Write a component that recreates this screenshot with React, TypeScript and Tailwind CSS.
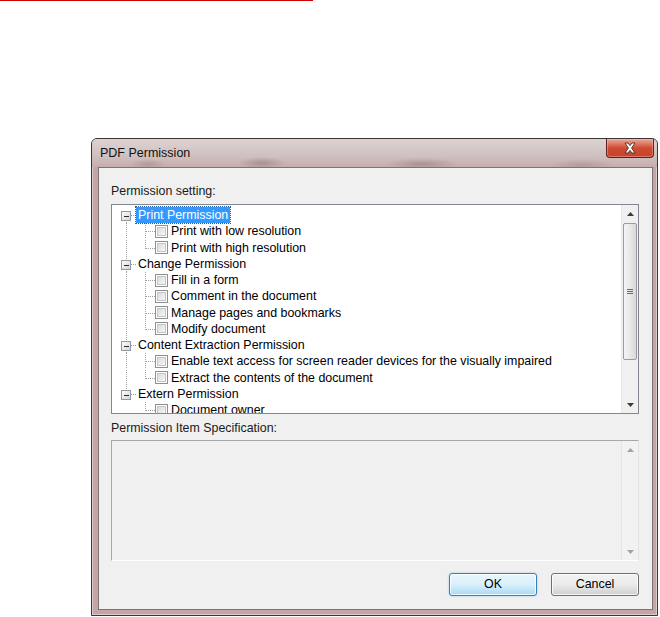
import React from 'react';

interface TreeGroup {
  label: string;
  selected?: boolean;
  children: string[];
}

const groups: TreeGroup[] = [
  { label: 'Print Permission', selected: true, children: ['Print with low resolution', 'Print with high resolution'] },
  {
    label: 'Change Permission',
    children: ['Fill in a form', 'Comment in the document', 'Manage pages and bookmarks', 'Modify document']
  },
  {
    label: 'Content Extraction Permission',
    children: [
      'Enable text access for screen reader devices for the visually impaired',
      'Extract the contents of the document'
    ]
  },
  { label: 'Extern Permission', children: ['Document owner'] }
];

const DOT = '#a0a0a0';

// dotted connector for a root node, with the expand box
const RootLines: React.FC<{ first: boolean; last: boolean }> = ({ first, last }) => (
  <svg width="24" height="16" className="shrink-0" shapeRendering="crispEdges">
    {!first && <line x1="14.5" y1="0" x2="14.5" y2="4" stroke={DOT} strokeDasharray="1 1" />}
    {!last && <line x1="14.5" y1="13" x2="14.5" y2="16" stroke={DOT} strokeDasharray="1 1" />}
    <line x1="19" y1="8.5" x2="24" y2="8.5" stroke={DOT} strokeDasharray="1 1" />
    <defs>
      <linearGradient id="bx" x1="0" y1="0" x2="1" y2="1">
        <stop offset="0" stopColor="#ffffff" />
        <stop offset="1" stopColor="#d4d4d4" />
      </linearGradient>
    </defs>
    <rect x="9.5" y="4.5" width="9" height="9" fill="url(#bx)" stroke="#8f9aa6" />
    <line x1="12" y1="9.5" x2="17" y2="9.5" stroke="#2b2b2b" />
  </svg>
);

// dotted connector for a child row
const ChildLines: React.FC<{ rootLine: boolean; lastChild: boolean }> = ({ rootLine, lastChild }) => (
  <svg width="43" height="16" className="shrink-0" shapeRendering="crispEdges">
    {rootLine && <line x1="14.5" y1="0" x2="14.5" y2="16" stroke={DOT} strokeDasharray="1 1" />}
    <line x1="33.5" y1="0" x2="33.5" y2={lastChild ? 9 : 16} stroke={DOT} strokeDasharray="1 1" />
    <line x1="34" y1="8.5" x2="43" y2="8.5" stroke={DOT} strokeDasharray="1 1" />
  </svg>
);

const CheckBox: React.FC = () => (
  <div className="w-[13px] h-[13px] shrink-0 border border-[#8f8f8f] bg-white p-[1px]">
    <div className="w-full h-full border border-[#c2c6cb] bg-gradient-to-br from-[#dcdcdc] to-[#f6f6f6]" />
  </div>
);

const Arrow: React.FC<{ up?: boolean; color?: string }> = ({ up, color = '#222' }) => (
  <svg width="7" height="4" viewBox="0 0 7 4">
    <path d={up ? 'M0 4 L3.5 0 L7 4 Z' : 'M0 0 L7 0 L3.5 4 Z'} fill={color} />
  </svg>
);

const TreeScrollBar: React.FC = () => (
  <div className="w-[17px] shrink-0 flex flex-col bg-[#f0f0f0] border-l border-[#e8e8e8]">
    <div className="h-[17px] flex items-center justify-center">
      <Arrow up color="#3a3a3a" />
    </div>
    <div className="mt-[1px] mx-[1px] h-[137px] rounded-[2px] border border-[#9b9b9b] bg-gradient-to-r from-[#f4f4f4] via-[#e9e9e9] to-[#d8d8d8] flex items-center justify-center">
      <div className="flex flex-col gap-[1px]">
        <div className="w-[6px] h-[1px] bg-[#6b6b6b]" />
        <div className="w-[6px] h-[1px] bg-[#6b6b6b]" />
        <div className="w-[6px] h-[1px] bg-[#6b6b6b]" />
      </div>
    </div>
    <div className="flex-1" />
    <div className="h-[17px] flex items-center justify-center">
      <Arrow color="#3a3a3a" />
    </div>
  </div>
);

const App: React.FC = () => {
  return (
    <div className="w-[660px] h-[617px] bg-white overflow-hidden font-['Liberation_Sans',Arial,sans-serif] text-[12.4px] text-black">
      {/* red rule at the very top */}
      <div className="w-[313px] h-[1px] bg-[#d00000]" />

      <div className="pt-[137px] pl-[91px]">
        {/* window */}
        <div className="w-[567px] h-[478px] rounded-t-[6px] border border-[#3d3535] bg-[#c4a5a5] flex flex-col shadow-[inset_0_0_0_1px_rgba(255,255,255,0.45)]">
          {/* title bar */}
          <div className="h-[28px] shrink-0 flex items-start rounded-t-[5px] bg-[radial-gradient(ellipse_18px_5px_at_56px_25px,rgba(120,95,95,0.3),transparent),radial-gradient(ellipse_24px_6px_at_170px_24px,rgba(100,80,80,0.35),transparent),radial-gradient(ellipse_36px_6px_at_330px_25px,rgba(100,80,80,0.32),transparent),radial-gradient(ellipse_32px_6px_at_490px_26px,rgba(120,95,95,0.25),transparent),linear-gradient(to_bottom,#ddd3d3,#d0c0c0_60%,#c6adad)]">
            <div className="pl-[8px] h-[28px] flex items-center text-[12.5px] text-[#111]">PDF Permission</div>
            <div className="flex-1" />
            <div className="mr-[3px] w-[48px] h-[19px] rounded-b-[4px] border border-t-0 border-[#5c2219] bg-gradient-to-b from-[#e9a999] via-[#cf4a30] to-[#c3442c] flex items-center justify-center shadow-[inset_0_0_0_1px_rgba(255,200,190,0.4)]">
              <svg width="14" height="12" viewBox="0 0 14 12">
                <path
                  d="M2 1 L5 1 L7 3.6 L9 1 L12 1 L8.6 6 L12 11 L9 11 L7 8.4 L5 11 L2 11 L5.4 6 Z"
                  fill="#ffffff"
                  stroke="#4a2a26"
                  strokeWidth="0.9"
                  strokeLinejoin="round"
                />
              </svg>
            </div>
          </div>

          {/* client area */}
          <div className="ml-[6px] mr-[4px] h-[443px] border border-[#7d7373] bg-[#f0f0f0] pl-[12px] pr-[13px] pt-[15px] flex flex-col">
            <div className="h-[16px] leading-[16px] text-[#1a1a1a]">Permission setting:</div>

            {/* tree */}
            <div className="mt-[5px] h-[210px] border border-[#828790] bg-white flex overflow-hidden">
              <div className="flex-1 pt-[2px] overflow-hidden">
                {groups.map((g, gi) => {
                  const lastRoot = gi === groups.length - 1;
                  return (
                    <div key={g.label}>
                      <div className="h-[16.25px] flex items-center">
                        <RootLines first={gi === 0} last={lastRoot} />
                        <span
                          className={
                            g.selected
                              ? 'h-[16px] leading-[16px] px-[2px] bg-[#3399ff] text-white outline outline-1 outline-dotted outline-[#1e5fa8]'
                              : 'h-[16px] leading-[16px] px-[2px]'
                          }
                        >
                          {g.label}
                        </span>
                      </div>
                      {g.children.map((c, ci) => (
                        <div key={c} className="h-[16.25px] flex items-center whitespace-nowrap">
                          <ChildLines rootLine={!lastRoot} lastChild={ci === g.children.length - 1} />
                          <CheckBox />
                          <span className="ml-[3px] leading-[16px]">{c}</span>
                        </div>
                      ))}
                    </div>
                  );
                })}
              </div>
              <TreeScrollBar />
            </div>

            <div className="mt-[6px] h-[16px] leading-[16px] text-[#1a1a1a]">Permission Item Specification:</div>

            {/* specification box */}
            <div className="mt-[4px] h-[121px] flex border-t border-l border-[#a8a8a8] border-b border-r border-b-white border-r-[#e3e3e3] bg-[#f0f0f0]">
              <div className="flex-1" />
              <div className="w-[17px] flex flex-col border-l border-[#e6e6e6] bg-[#f2f2f2]">
                <div className="h-[17px] flex items-center justify-center">
                  <Arrow up color="#a3a3a3" />
                </div>
                <div className="flex-1" />
                <div className="h-[17px] flex items-center justify-center">
                  <Arrow color="#a3a3a3" />
                </div>
              </div>
            </div>

            {/* buttons */}
            <div className="mt-[12px] flex justify-end gap-[14px]">
              <button className="w-[88px] h-[23px] rounded-[3px] border border-[#3c7fb1] bg-gradient-to-b from-[#eaf6fd] via-[#d9f0fc] to-[#a7d9f5] shadow-[inset_0_0_0_1px_rgba(255,255,255,0.8),0_0_2px_#7ec9ef] text-[12.4px] text-black">
                OK
              </button>
              <button className="w-[88px] h-[23px] rounded-[3px] border border-[#707070] bg-gradient-to-b from-[#f2f2f2] via-[#ebebeb] to-[#cfcfcf] shadow-[inset_0_0_0_1px_rgba(255,255,255,0.8)] text-[12.4px] text-black">
                Cancel
              </button>
            </div>
          </div>
        </div>
      </div>
    </div>
  );
};

export default App;
